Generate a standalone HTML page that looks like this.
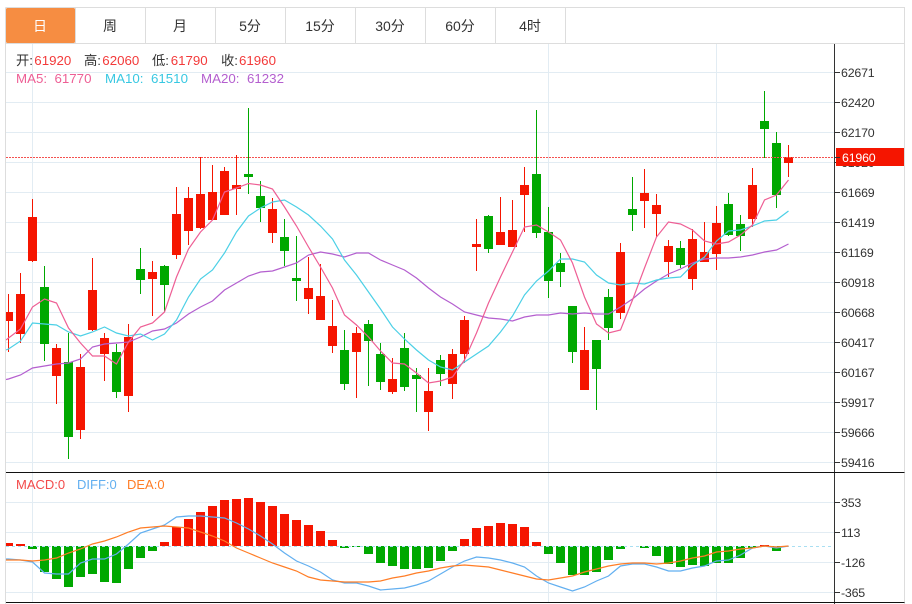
<!DOCTYPE html>
<html>
<head>
<meta charset="utf-8">
<style>
html,body{margin:0;padding:0;background:#fff;width:912px;height:604px;overflow:hidden}
svg{display:block}
text{font-family:"Liberation Sans","Noto Sans CJK SC",sans-serif}
.t{font-size:14px;fill:#333;text-anchor:middle}
.l{font-size:13.3px}
.a{font-size:12.4px;fill:#333;letter-spacing:-.2px}
</style>
</head>
<body>
<svg width="912" height="604" viewBox="0 0 912 604" xmlns="http://www.w3.org/2000/svg">
<defs><clipPath id="c"><rect x="6" y="44" width="828" height="560"/></clipPath></defs>
<!-- tabs -->
<path d="M5.5 7.5H904.5V604M5.5 7.5V604M6 43.5H904.5" fill="none" stroke="#ddd"/>
<path d="M145.5 8V43M215.5 8V43M285.5 8V43M355.5 8V43M425.5 8V43M495.5 8V43M565.5 8V43M75.5 8V43" fill="none" stroke="#ddd"/>
<rect x="6" y="8" width="69" height="35" rx="1.5" fill="#f68d42"/>
<text class="t" x="40" y="31" style="fill:#fff">日</text>
<text class="t" x="110" y="31">周</text>
<text class="t" x="180" y="31">月</text>
<text class="t" x="250" y="31">5分</text>
<text class="t" x="320" y="31">15分</text>
<text class="t" x="390" y="31">30分</text>
<text class="t" x="460" y="31">60分</text>
<text class="t" x="530" y="31">4时</text>
<!-- grid -->
<path d="M6 72.5H834M6 102.5H834M6 132.5H834M6 162.5H834M6 192.5H834M6 222.5H834M6 252.5H834M6 282.5H834M6 312.5H834M6 342.5H834M6 372.5H834M6 402.5H834M6 432.5H834M6 462.5H834M6 502.5H834M6 532.5H834M6 562.5H834M6 592.5H834M32.5 44V472M548.5 44V472M716.5 44V472M32.5 473V602M548.5 473V602M716.5 473V602" fill="none" stroke="#e2ecf3"/>
<g clip-path="url(#c)">
<!-- wicks -->
<path fill="none" stroke="#f51500" d="M8.5 294V352M20.5 273V343M32.5 199V262M56.5 344V404M80.5 354V439M92.5 258V331M104.5 333V381M128.5 324V412M152.5 261V316M176.5 187V259M188.5 187V245M200.5 157V229M212.5 165V220M224.5 167V215M236.5 155V215M272.5 198V243M308.5 257V314M320.5 264V320M332.5 300V353M356.5 327V398M392.5 358V394M428.5 368V431M452.5 349V399M464.5 316V363M476.5 219V271M500.5 197V245M512.5 200V247M524.5 167V232M584.5 327V390M620.5 243V319M644.5 169V228M656.5 194V237M668.5 240V277M692.5 229V290M704.5 222V262M716.5 206V270M752.5 168V227M788.5 145V177"/>
<path fill="none" stroke="#00a800" d="M44.5 266V361M68.5 333V459M116.5 344V398M140.5 248V294M164.5 265V312M248.5 108V194M260.5 181V222M284.5 219V266M296.5 236V301M344.5 330V390M368.5 320V386M380.5 343V390M404.5 333V391M416.5 368V412M440.5 355V386M488.5 215V253M536.5 110V238M548.5 207V298M560.5 253V287M572.5 306V363M596.5 340V410M608.5 289V340M632.5 177V231M680.5 241V268M728.5 193V236M740.5 215V251M764.5 91V158M776.5 132V208"/>
<!-- bodies -->
<path fill="#f51500" d="M6 312h7v9h-7zM16 294h9v40h-9zM28 217h9v44h-9zM52 348h9v28h-9zM76 367h9v63h-9zM88 290h9v40h-9zM100 338h9v16h-9zM124 337h9v59h-9zM148 272h9v7h-9zM172 214h9v41h-9zM184 198h9v33h-9zM196 194h9v34h-9zM208 192h9v28h-9zM220 171h9v44h-9zM232 185h9v4h-9zM268 209h9v24h-9zM304 288h9v11h-9zM316 296h9v24h-9zM328 326h9v20h-9zM352 333h9v19h-9zM388 379h9v13h-9zM424 391h9v21h-9zM448 354h9v30h-9zM460 320h9v34h-9zM472 244h9v3h-9zM496 232h9v13h-9zM508 230h9v17h-9zM520 185h9v10h-9zM580 350h9v40h-9zM616 252h9v61h-9zM640 193h9v8h-9zM652 205h9v9h-9zM664 246h9v16h-9zM688 239h9v40h-9zM700 252h9v10h-9zM712 223h9v31h-9zM748 185h9v34h-9zM784 157h9v6h-9z"/>
<path fill="#00a800" d="M40 287h9v57h-9zM64 362h9v75h-9zM112 352h9v40h-9zM136 269h9v11h-9zM160 266h9v19h-9zM244 174h9v3h-9zM256 196h9v12h-9zM280 237h9v14h-9zM292 278h9v3h-9zM340 350h9v34h-9zM364 324h9v17h-9zM376 354h9v28h-9zM400 348h9v39h-9zM412 375h9v4h-9zM436 360h9v14h-9zM484 216h9v33h-9zM532 174h9v59h-9zM544 232h9v49h-9zM556 263h9v9h-9zM568 306h9v46h-9zM592 340h9v29h-9zM604 297h9v31h-9zM628 209h9v6h-9zM676 248h9v17h-9zM724 204h9v31h-9zM736 224h9v12h-9zM760 121h9v8h-9zM772 143h9v52h-9z"/>
<!-- MA lines -->
<polyline fill="none" stroke="#b45fcf" stroke-width="1.2" points="6,379.5 8.5,379 20.5,375 32.5,368 44.5,366 56.5,364 68.5,363 80.5,359 92.5,347 104.5,344 116.5,343 128.5,342 140.5,337 152.5,331 164.5,329 176.5,323 188.5,314 200.5,307 212.5,301 224.5,290 236.5,283 248.5,276 260.5,272 272.5,271 284.5,267 296.5,263 308.5,255 320.5,252 332.5,254 344.5,257 356.5,253 368.5,253 380.5,260 392.5,265 404.5,270 416.5,278 428.5,288 440.5,297 452.5,304 464.5,312 476.5,315 488.5,318 500.5,319 512.5,321 524.5,317 536.5,315 548.5,315 560.5,313 572.5,314 584.5,313 596.5,314 608.5,314 620.5,307 632.5,299 644.5,289 656.5,281 668.5,274 680.5,269 692.5,263 704.5,259 716.5,258 728.5,258 740.5,257 752.5,255 764.5,252 776.5,250 788.5,244"/>
<polyline fill="none" stroke="#4cd0e6" stroke-width="1.2" points="6,350 8.5,349 20.5,341 32.5,323 44.5,324 56.5,325 68.5,332 80.5,336 92.5,332 104.5,327 116.5,333 128.5,336 140.5,334 152.5,340 164.5,334 176.5,320 188.5,297 200.5,279 212.5,270 224.5,253 236.5,232 248.5,216 260.5,208 272.5,202 284.5,200 296.5,207 308.5,215 320.5,226 332.5,239 344.5,260 356.5,275 368.5,292 380.5,309 392.5,327 404.5,339 416.5,350 428.5,360 440.5,367 452.5,370 464.5,362 476.5,354 488.5,346 500.5,332 512.5,316 524.5,295 536.5,281 548.5,271 560.5,259 572.5,259 584.5,262 596.5,275 608.5,283 620.5,285 632.5,283 644.5,284 656.5,280 668.5,278 680.5,277 692.5,265 704.5,257 716.5,241 728.5,231 740.5,230 752.5,226 764.5,221 776.5,220 788.5,211"/>
<polyline fill="none" stroke="#ee5f95" stroke-width="1.2" points="6,340 8.5,338 20.5,329 32.5,307 44.5,299 56.5,303 68.5,328 80.5,343 92.5,356 104.5,356 116.5,364 128.5,342 140.5,327 152.5,323 164.5,312 176.5,277 188.5,249 200.5,232 212.5,220 224.5,192 236.5,188 248.5,183.5 260.5,185 272.5,189 284.5,207 296.5,226 308.5,247 320.5,267 332.5,288 344.5,315 356.5,325 368.5,337 380.5,351 392.5,363 404.5,364 416.5,373 428.5,383 440.5,381 452.5,377 464.5,360 476.5,333 488.5,303 500.5,277 512.5,252 524.5,227 536.5,225 548.5,232 560.5,240 572.5,263 584.5,297 596.5,324 608.5,333 620.5,330 632.5,300 644.5,268 656.5,237 668.5,222 680.5,224 692.5,230 704.5,241 716.5,244 728.5,242 740.5,235 752.5,225 764.5,200 776.5,195 788.5,180"/>
<!-- MACD bars -->
<path fill="#f51500" d="M6 543h7v3h-7zM16 544h9v2h-9zM160 542h9v4h-9zM172 527h9v19h-9zM184 519h9v27h-9zM196 512h9v34h-9zM208 506h9v40h-9zM220 500h9v46h-9zM232 499h9v47h-9zM244 498h9v48h-9zM256 502h9v44h-9zM268 506h9v40h-9zM280 514h9v32h-9zM292 520h9v26h-9zM304 525h9v21h-9zM316 531h9v15h-9zM328 540h9v6h-9zM460 539h9v7h-9zM472 528h9v18h-9zM484 526h9v20h-9zM496 523h9v23h-9zM508 524h9v22h-9zM520 527h9v19h-9zM532 542h9v4h-9zM760 545h9v1h-9z"/>
<path fill="#00a800" d="M28 546h9v3h-9zM40 546h9v26h-9zM52 546h9v33h-9zM64 546h9v41h-9zM76 546h9v31h-9zM88 546h9v28h-9zM100 546h9v36h-9zM112 546h9v37h-9zM124 546h9v23h-9zM136 546h9v12h-9zM148 546h9v5h-9zM340 546h9v2h-9zM352 546h9v1h-9zM364 546h9v8h-9zM376 546h9v17h-9zM388 546h9v20h-9zM400 546h9v23h-9zM412 546h9v23h-9zM424 546h9v22h-9zM436 546h9v15h-9zM448 546h9v5h-9zM544 546h9v8h-9zM556 546h9v17h-9zM568 546h9v29h-9zM580 546h9v29h-9zM592 546h9v26h-9zM604 546h9v14h-9zM616 546h9v3h-9zM640 546h9v2h-9zM652 546h9v10h-9zM664 546h9v18h-9zM676 546h9v21h-9zM688 546h9v19h-9zM700 546h9v20h-9zM712 546h9v17h-9zM724 546h9v17h-9zM736 546h9v12h-9zM748 546h9v2h-9zM772 546h9v5h-9z"/>
<path d="M6 546.5H834" fill="none" stroke="#a9dff2" stroke-dasharray="3 3"/>
<polyline fill="none" stroke="#62aff0" stroke-width="1.2" points="6,559 8.5,559 20.5,560 32.5,562 44.5,573 56.5,574 68.5,574 80.5,563 92.5,559 104.5,559 116.5,554 128.5,544 140.5,533 152.5,529 164.5,525 176.5,517 188.5,516 200.5,516 212.5,517 224.5,518 236.5,523 248.5,529 260.5,536 272.5,544 284.5,553 296.5,561 308.5,566 320.5,572 332.5,580 344.5,583 356.5,583 368.5,586 380.5,590 392.5,589 404.5,588 416.5,585 428.5,581 440.5,574 452.5,567 464.5,561 476.5,557 488.5,558 500.5,560 512.5,563 524.5,567 536.5,576 548.5,583 560.5,587 572.5,591 584.5,587 596.5,581 608.5,576 620.5,566 632.5,564 644.5,564 656.5,567 668.5,571 680.5,571 692.5,568 704.5,566 716.5,561 728.5,560 740.5,555 752.5,548 764.5,546 776.5,548 788.5,546"/>
<polyline fill="none" stroke="#ff7d26" stroke-width="1.2" points="6,560 8.5,560 20.5,560 32.5,561 44.5,560 56.5,558 68.5,553 80.5,549 92.5,544 104.5,541 116.5,537 128.5,532 140.5,528 152.5,527 164.5,526 176.5,527 188.5,528 200.5,532 212.5,536 224.5,541 236.5,548 248.5,553 260.5,558 272.5,563 284.5,567 296.5,571 308.5,577 320.5,580 332.5,581 344.5,582 356.5,582 368.5,582 380.5,581 392.5,578 404.5,576 416.5,573 428.5,571 440.5,568 452.5,566 464.5,565 476.5,566 488.5,567 500.5,570 512.5,573 524.5,576 536.5,579 548.5,580 560.5,578 572.5,576 584.5,572 596.5,569 608.5,566 620.5,564 632.5,563 644.5,563 656.5,564 668.5,563 680.5,561 692.5,558 704.5,556 716.5,552 728.5,551 740.5,549 752.5,548 764.5,546 776.5,547 788.5,546"/>
</g>
<!-- price line -->
<path d="M6 157.5H834" fill="none" stroke="#f4514f" stroke-dasharray="2 1"/>
<!-- axis -->
<path d="M834.5 44V604" fill="none" stroke="#333"/>
<path d="M6 472.5H904.5M6 602.5H904.5" fill="none" stroke="#111"/>
<path d="M834 72.5h6M834 102.5h6M834 132.5h6M834 162.5h6M834 192.5h6M834 222.5h6M834 252.5h6M834 282.5h6M834 312.5h6M834 342.5h6M834 372.5h6M834 402.5h6M834 432.5h6M834 462.5h6M834 502.5h6M834 532.5h6M834 562.5h6M834 592.5h6" fill="none" stroke="#333"/>
<text class="a" x="841" y="77">62671</text>
<text class="a" x="841" y="107">62420</text>
<text class="a" x="841" y="137">62170</text>
<text class="a" x="841" y="167">61920</text>
<text class="a" x="841" y="197">61669</text>
<text class="a" x="841" y="227">61419</text>
<text class="a" x="841" y="257">61169</text>
<text class="a" x="841" y="287">60918</text>
<text class="a" x="841" y="317">60668</text>
<text class="a" x="841" y="347">60417</text>
<text class="a" x="841" y="377">60167</text>
<text class="a" x="841" y="407">59917</text>
<text class="a" x="841" y="437">59666</text>
<text class="a" x="841" y="467">59416</text>
<text class="a" x="841" y="507">353</text>
<text class="a" x="841" y="537">113</text>
<text class="a" x="841" y="567">-126</text>
<text class="a" x="841" y="597">-365</text>
<rect x="836" y="148" width="68" height="18" fill="#f51500"/>
<path d="M834 157.5h6" fill="none" stroke="#333"/>
<text class="a" x="842" y="162" style="fill:#fff">61960</text>
<!-- legends -->
<g class="l">
<text x="16" y="65" fill="#333">开:</text><text x="34.3" y="65" fill="#f33a3a">61920</text>
<text x="84" y="65" fill="#333">高:</text><text x="102.3" y="65" fill="#f33a3a">62060</text>
<text x="152" y="65" fill="#333">低:</text><text x="170.7" y="65" fill="#f33a3a">61790</text>
<text x="221" y="65" fill="#333">收:</text><text x="239" y="65" fill="#f33a3a">61960</text>
<text x="16" y="83" fill="#ee5f95">MA5:</text><text x="54.5" y="83" fill="#ee5f95">61770</text>
<text x="105" y="83" fill="#38c8e2">MA10:</text><text x="151" y="83" fill="#38c8e2">61510</text>
<text x="201" y="83" fill="#b45fcf">MA20:</text><text x="247" y="83" fill="#b45fcf">61232</text>
<text x="16" y="489" fill="#f34a4a" style="font-size:13px">MACD:0</text>
<text x="77" y="489" fill="#62aff0" style="font-size:13px">DIFF:0</text>
<text x="127" y="489" fill="#ff7d26" style="font-size:13px">DEA:0</text>
</g>
</svg>
</body>
</html>
